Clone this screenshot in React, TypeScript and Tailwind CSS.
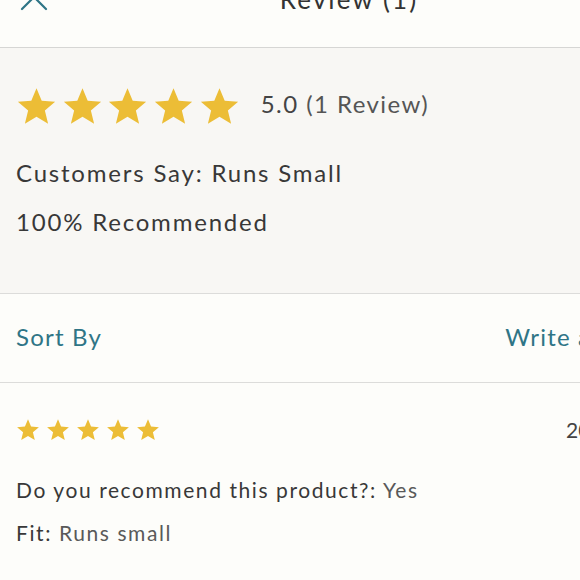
import { X } from "lucide-react";

function Star({ size }: { size: number }) {
  return (
    <svg width={size} height={size} viewBox="0 0 24 24" className="shrink-0">
      <path
        d="M12 1.3l3.05 7.3 7.85.6-6 5.15 1.9 7.75L12 18l-6.8 4.1 1.9-7.75-6-5.15 7.85-.6z"
        fill="#ecbd36"
      />
    </svg>
  );
}

function Stars({ size, gap }: { size: number; gap: string }) {
  return (
    <div className={`flex ${gap}`}>
      {[0, 1, 2, 3, 4].map((i) => (
        <Star key={i} size={size} />
      ))}
    </div>
  );
}

export default function App() {
  return (
    <div className="h-[580px] w-[580px] overflow-hidden bg-[#fdfdfa] font-['Lato','Noto_Sans',sans-serif] text-[#383838]">
      <div className="-mt-[24px] w-[698px]">
        <header className="relative flex h-[72px] items-center justify-center border-b border-[#d6d6d4] pb-[24px]">
          <button className="absolute left-[10px] top-[-3px] text-[#2f7586]" aria-label="Close">
            <X size={48} strokeWidth={1.1} />
          </button>
          <h1 className="text-[26px] tracking-[0.08em] text-[#333]">Review (1)</h1>
        </header>

        <section className="h-[246px] border-b border-[#dcdcda] bg-[#f8f7f4] px-4 pt-[38px]">
          <div className="flex items-center gap-[21px]">
            <Stars size={41} gap="gap-[4.7px]" />
            <span className="pb-[5px] text-[24px] tracking-[0.06em] text-[#444]">
              5.0 <span className="text-[#555]">(1 Review)</span>
            </span>
          </div>
          <p className="mt-[28px] text-[24px] tracking-[0.075em]">Customers Say: Runs Small</p>
          <p className="mt-[13px] text-[24px] tracking-[0.075em]">100% Recommended</p>
        </section>

        <div className="flex h-[89px] items-center justify-between border-b border-[#dcdcda] px-4 pb-[3px] text-[24px] tracking-[0.05em] text-[#2f7586]">
          <span>Sort By</span>
          <span>Write a Review</span>
        </div>

        <article className="px-4 pt-[31px]">
          <div className="flex items-center justify-between">
            <Stars size={24} gap="gap-[6px]" />
            <span className="mr-[3px] text-[21px] text-[#444]">2021-06-01</span>
          </div>
          <p className="mt-[28px] text-[21px] tracking-[0.075em]">
            Do you recommend this product?: <span className="text-[#595959]">Yes</span>
          </p>
          <p className="mt-[12px] text-[21px] tracking-[0.075em]">
            Fit: <span className="text-[#595959]">Runs small</span>
          </p>
        </article>
      </div>
    </div>
  );
}
